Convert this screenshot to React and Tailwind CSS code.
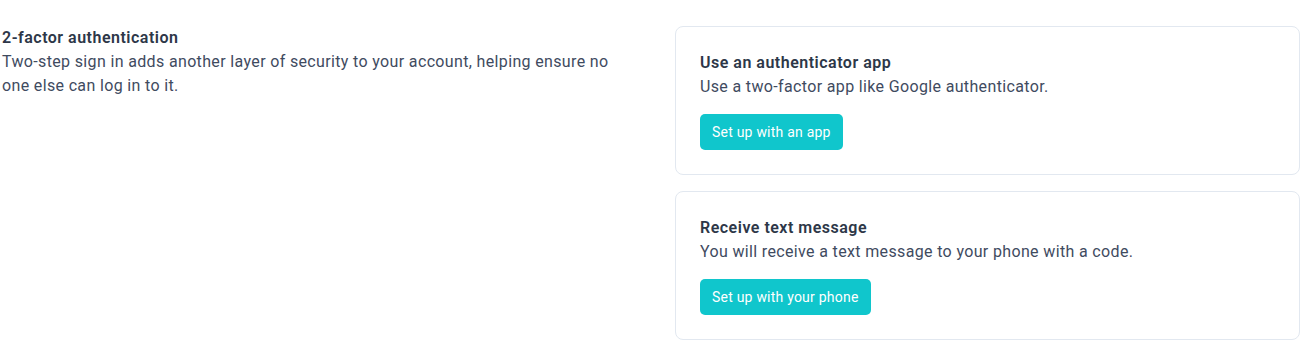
export default function App() {
  const font = { fontFamily: "Roboto, 'Noto Sans', sans-serif" };
  return (
    <div className="w-[1308px] h-[360px] bg-white pt-[26px] pl-[2px] flex text-[#2d3748]" style={font}>
      <div className="w-[630px] shrink-0">
        <h3 className="text-base leading-6 font-semibold tracking-[0.5px] text-[#2d3748]">2-factor authentication</h3>
        <p className="text-base leading-6 text-[#3f4b5f] tracking-[0.35px]">
          Two-step sign in adds another layer of security to your account, helping ensure no one else can log in to it.
        </p>
      </div>
      <div className="ml-[43px] w-[625px] flex flex-col gap-4">
        <Card title="Use an authenticator app" desc="Use a two-factor app like Google authenticator." button="Set up with an app" />
        <Card title="Receive text message" desc="You will receive a text message to your phone with a code." button="Set up with your phone" />
      </div>
    </div>
  );
}

function Card({ title, desc, button }) {
  return (
    <div className="border border-[#e2e8f0] rounded-lg p-6">
      <h4 className="text-base leading-6 font-semibold tracking-[0.5px] text-[#2d3748]">{title}</h4>
      <p className="text-base leading-6 text-[#3f4b5f] tracking-[0.35px]">{desc}</p>
      <button className="mt-[15px] h-9 px-3 rounded-[5px] bg-[#10c6cc] text-white text-sm tracking-[0.22px]">{button}</button>
    </div>
  );
}
